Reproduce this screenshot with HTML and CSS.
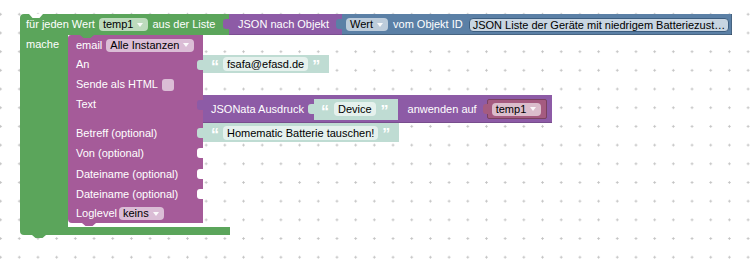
FILE: index.html
```html
<!DOCTYPE html>
<html lang="de">
<head>
<meta charset="utf-8">
<title>Blockly</title>
<link rel="stylesheet" href="styles.css">
</head>
<body>
<div class="workspace">
  <div class="loop">
    <div class="loop-top">
      <div class="loop-head">
        <span class="notch notch-cut"></span>
        <span class="lbl">für jeden Wert</span>
        <span class="dd dd-green">temp1<i class="arr"></i></span>
        <span class="lbl">aus der Liste</span>
      </div>
      <div class="blk json-obj">
        <span class="tab"></span>
        <span class="lbl">JSON nach Objekt</span>
      </div>
      <div class="blk getobj">
        <span class="tab"></span>
        <span class="dd dd-blue">Wert<i class="arr"></i></span>
        <span class="lbl">vom Objekt ID</span>
        <span class="objfield">JSON Liste der Geräte mit niedrigem Batteriezust…</span>
      </div>
    </div>
    <div class="loop-body">
      <div class="loop-col"><span class="lbl">mache</span></div>
      <div class="stmt">
        <div class="email">
          <div class="erow">
            <div class="ecell first h20">
              <span class="notch notch-green"></span>
              <span class="lbl">email</span>
              <span class="dd dd-pink">Alle Instanzen<i class="arr"></i></span>
            </div>
          </div>
          <div class="erow">
            <div class="ecell h19"><span class="lbl">An</span></div>
            <div class="blk txt h18">
              <span class="tab"></span>
              <span class="q">“</span>
              <span class="tf">fsafa@efasd.de</span>
              <span class="q">”</span>
            </div>
          </div>
          <div class="erow">
            <div class="ecell h21">
              <span class="lbl">Sende als HTML</span>
              <span class="check"></span>
            </div>
          </div>
          <div class="erow">
            <div class="ecell h28 top"><span class="lbl">Text</span></div>
            <div class="blk jsonata">
              <span class="tab"></span>
              <span class="lbl">JSONata Ausdruck</span>
              <div class="blk txt h21">
                <span class="tab"></span>
                <span class="q">“</span>
                <span class="tf">Device</span>
                <span class="q">”</span>
              </div>
              <span class="lbl">anwenden auf</span>
              <div class="blk var">
                <span class="tab"></span>
                <span class="dd dd-var">temp1<i class="arr"></i></span>
              </div>
            </div>
          </div>
          <div class="erow">
            <div class="ecell h20"><span class="lbl">Betreff (optional)</span></div>
            <div class="blk txt h19">
              <span class="tab"></span>
              <span class="q">“</span>
              <span class="tf">Homematic Batterie tauschen!</span>
              <span class="q">”</span>
            </div>
          </div>
          <div class="erow">
            <div class="ecell h21"><span class="lbl">Von (optional)</span><span class="slot"></span></div>
          </div>
          <div class="erow">
            <div class="ecell h20"><span class="lbl">Dateiname (optional)</span><span class="slot"></span></div>
          </div>
          <div class="erow">
            <div class="ecell h20"><span class="lbl">Dateiname (optional)</span><span class="slot"></span></div>
          </div>
          <div class="erow">
            <div class="ecell last h19">
              <span class="lbl">Loglevel</span>
              <span class="dd dd-pink">keins<i class="arr"></i></span>
              <span class="notch notch-purple"></span>
            </div>
          </div>
        </div>
      </div>
    </div>
    <div class="loop-bottom"><span class="notch notch-green-down"></span></div>
  </div>
</div>
</body>
</html>
```

FILE: styles.css
```css
* { box-sizing: border-box; }

html, body {
  margin: 0;
  padding: 0;
}

body {
  width: 752px;
  height: 261px;
  overflow: hidden;
  background: #fff;
  font-family: "Liberation Sans", Arial, sans-serif;
  font-size: 11px;
}

.workspace {
  position: relative;
  width: 752px;
  height: 261px;
  background-color: #fff;
  background-image: radial-gradient(circle, #c2c2c2 0.9px, transparent 1.4px);
  background-size: 18.7px 18.7px;
  background-position: -8.75px 4.95px;
}

/* ---------- generic ---------- */
.lbl {
  color: #fff;
  white-space: nowrap;
  line-height: 13px;
}

.blk {
  position: relative;
  display: flex;
  align-items: center;
}

.tab {
  position: absolute;
  left: -6px;
  top: 5px;
  width: 6px;
  height: 10px;
  border-radius: 3px 0 0 3px;
  background: inherit;
}

.dd {
  display: inline-flex;
  align-items: center;
  gap: 4px;
  height: 13px;
  line-height: 13px;
  padding: 0 5px 0 4px;
  border-radius: 4px;
  color: #000;
  white-space: nowrap;
}

.arr {
  display: block;
  width: 0;
  height: 0;
  border-left: 3px solid transparent;
  border-right: 3px solid transparent;
  border-top: 4px solid rgba(255, 255, 255, 0.9);
}

.dd-green { background: #bddbbd; }
.dd-blue { background: #bdccdb; }
.dd-pink { background: #dbbdd6; }
.dd-var { background: #dbbdcc; }

.notch {
  position: absolute;
  width: 14px;
  height: 4px;
  clip-path: polygon(0 0, 100% 0, 75% 100%, 25% 100%);
}

.h18 { height: 18px; }
.h19 { height: 19px; }
.h20 { height: 20px; }
.h21 { height: 21px; }
.h28 { height: 28px; }

/* ---------- loop block ---------- */
.loop {
  position: absolute;
  left: 20px;
  top: 14px;
  display: flex;
  flex-direction: column;
}

.loop-top {
  display: flex;
  height: 21px;
}

.loop-head {
  position: relative;
  width: 209px;
  background: #5ba55b;
  border-radius: 4px 0 0 0;
  display: flex;
  align-items: center;
  gap: 4px;
  padding-left: 6px;
}

.notch-cut {
  top: 0;
  left: 9px;
  background: #fff;
}

.json-obj {
  width: 113px;
  background: #8d5ba6;
  padding-left: 9px;
  box-shadow: inset 0 -1px 0 rgba(0, 0, 0, 0.12);
}

.getobj {
  background: #5b80a6;
  padding: 0 3px 0 4px;
  gap: 5px;
  box-shadow: inset 0 -1px 0 rgba(0, 0, 0, 0.22), inset -1px 0 0 rgba(0, 0, 0, 0.22);
}

.objfield {
  height: 14px;
  line-height: 12px;
  margin-left: 1px;
  padding: 0 3px;
  border: 1px solid #3d5e80;
  border-radius: 4px;
  background: #c8d5e2;
  color: #000;
  white-space: nowrap;
}

.loop-body {
  display: flex;
}

.loop-col {
  width: 48px;
  background: #5ba55b;
  padding: 3px 0 0 6px;
}

.stmt {
  padding-bottom: 4px;
}

.loop-bottom {
  position: relative;
  width: 210px;
  height: 8px;
  background: #5ba55b;
  border-radius: 0 0 0 4px;
}

.notch-green-down {
  top: 100%;
  left: 12px;
  height: 3px;
  background: #5ba55b;
}

/* ---------- email block ---------- */
.email {
  display: flex;
  flex-direction: column;
}

.erow {
  display: flex;
  align-items: flex-start;
}

.ecell {
  position: relative;
  width: 135px;
  background: #a55b99;
  display: flex;
  align-items: center;
  gap: 4px;
  padding-left: 8px;
}

.ecell.top {
  align-items: flex-start;
  padding-top: 3px;
}

.ecell.first { border-radius: 3px 0 0 0; }
.ecell.last { border-radius: 0 0 0 4px; gap: 2px; }

.notch-green {
  top: 0;
  left: 12px;
  height: 3px;
  background: #5ba55b;
}

.notch-purple {
  top: 100%;
  left: 14px;
  height: 3px;
  background: #a55b99;
}

.slot {
  position: absolute;
  right: 0;
  top: 5px;
  width: 6px;
  height: 10px;
  border-radius: 3px 0 0 3px;
  background: #fff;
}

.check {
  width: 12px;
  height: 12px;
  border-radius: 3px;
  background: #dbbdd6;
}

/* ---------- text blocks ---------- */
.txt {
  background: #bfdcd3;
  gap: 4px;
  padding: 0 9px 0 8px;
}

.q {
  align-self: flex-start;
  margin-top: 4px;
  color: #fff;
  font-weight: bold;
  font-size: 16px;
  line-height: 16px;
}

.tf {
  height: 14px;
  line-height: 14px;
  padding: 0 4px;
  border-radius: 4px;
  background: rgba(255, 255, 255, 0.6);
  color: #000;
  white-space: nowrap;
}

/* ---------- JSONata block ---------- */
.jsonata {
  height: 28px;
  background: #8d5ba6;
  padding: 0 5px 0 8px;
  gap: 10px;
  box-shadow: inset 0 -1px 0 rgba(0, 0, 0, 0.15);
}

.jsonata .txt {
  padding-left: 7px;
  gap: 5px;
}

.jsonata .q {
  margin-top: 5px;
}

.var {
  height: 20px;
  background: #a55b80;
  border: 1px solid #7a4260;
  border-radius: 2px;
  padding: 0 5px 0 4px;
}

.var .tab {
  top: 4px;
  left: -5px;
  width: 5px;
}
```
